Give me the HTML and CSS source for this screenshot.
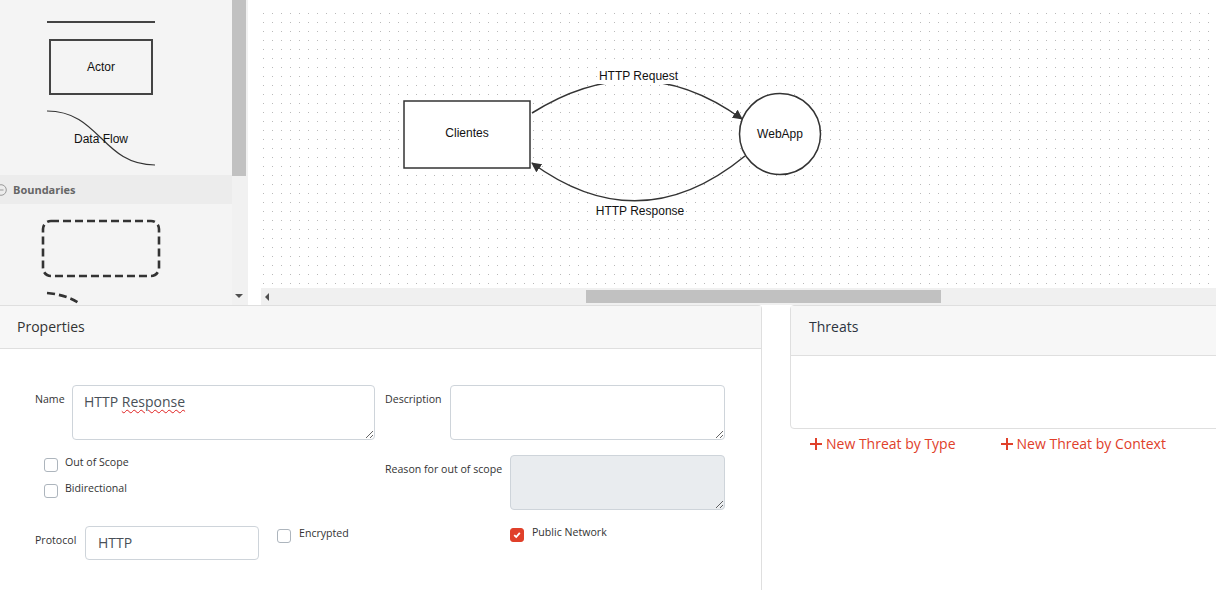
FILE: index.html
```html
<!DOCTYPE html>
<html lang="en">
<head>
    <meta charset="UTF-8">
    <title>Threat Model Editor</title>
    <link rel="stylesheet" href="styles.css">
</head>
<body>
    <div class="editor">
        <div class="stencil">
            <svg class="stencil-shapes" width="232" height="175">
                <line x1="47" y1="22" x2="155" y2="22" stroke="#444" stroke-width="2"/>
                <rect x="50" y="40" width="102" height="54" fill="none" stroke="#444" stroke-width="2"/>
                <text x="101" y="71" text-anchor="middle">Actor</text>
                <path d="M47 111 C100 111 102 165 155 165" fill="none" stroke="#333" stroke-width="1.2"/>
                <text x="101" y="143" text-anchor="middle">Data Flow</text>
            </svg>
            <div class="stencil-group">
                <svg class="group-icon" width="12" height="12" viewBox="0 0 12 12">
                    <circle cx="6" cy="6" r="5.3" fill="none" stroke="#999" stroke-width="1"/>
                    <line x1="3.5" y1="6" x2="8.5" y2="6" stroke="#999" stroke-width="1"/>
                </svg>
                <span>Boundaries</span>
            </div>
            <svg class="stencil-shapes" width="232" height="101">
                <rect x="43" y="17" width="116" height="55" rx="8" fill="none" stroke="#333" stroke-width="2.6" stroke-dasharray="8 4"/>
                <path d="M47 89 Q68 91 80 100" fill="none" stroke="#333" stroke-width="2.6" stroke-dasharray="8 4"/>
            </svg>
        </div>
        <div class="vscroll">
            <div class="vscroll-thumb"></div>
            <div class="vscroll-arrow"></div>
        </div>
        <div class="canvas">
            <svg class="diagram" width="968" height="288" viewBox="248 0 968 288">
                <defs>
                    <pattern id="dots" x="263" y="4" width="9" height="9" patternUnits="userSpaceOnUse">
                        <rect x="0" y="0" width="1" height="1" fill="#b9b9b9"/>
                    </pattern>
                    <marker id="arrow" viewBox="0 0 10 10" refX="9" refY="5" markerWidth="10" markerHeight="10" markerUnits="userSpaceOnUse" orient="auto">
                        <path d="M0 0 L10 5 L0 10 z" fill="#333"/>
                    </marker>
                </defs>
                <rect x="260" y="8" width="956" height="280" fill="url(#dots)"/>

                <rect x="404" y="101" width="126" height="67" fill="#fff" stroke="#333" stroke-width="1.5"/>
                <text x="467" y="137" text-anchor="middle">Clientes</text>

                <circle cx="780" cy="134" r="40.5" fill="#fff" stroke="#333" stroke-width="1.5"/>
                <text x="780" y="138" text-anchor="middle">WebApp</text>

                <path d="M532 113 Q640 45 742 119" fill="none" stroke="#333" stroke-width="1.5" marker-end="url(#arrow)"/>
                <rect x="597" y="67" width="83" height="17" fill="#fff"/>
                <text x="638.5" y="80" text-anchor="middle">HTTP Request</text>

                <path d="M745 156 Q640 242 532 163" fill="none" stroke="#333" stroke-width="1.5" marker-end="url(#arrow)"/>
                <rect x="594" y="202" width="92" height="17" fill="#fff"/>
                <text x="640" y="215" text-anchor="middle">HTTP Response</text>
            </svg>
            <div class="hscroll">
                <div class="hscroll-arrow"></div>
                <div class="hscroll-thumb"></div>
            </div>
        </div>
    </div>

    <div class="panels">
        <div class="card properties">
            <div class="card-header">Properties</div>
            <div class="form-grid">
                <div class="field">
                    <label class="field-label name-label">Name</label>
                    <div class="textbox name-box">HTTP <span class="misspelled">Response</span></div>
                </div>
                <div class="field">
                    <label class="field-label desc-label">Description</label>
                    <textarea class="textbox desc-box"></textarea>
                </div>

                <div class="checks">
                    <div class="check-item">
                        <span class="check"></span>
                        <span class="check-label">Out of Scope</span>
                    </div>
                    <div class="check-item">
                        <span class="check"></span>
                        <span class="check-label">Bidirectional</span>
                    </div>
                </div>
                <div class="field">
                    <label class="field-label reason-label">Reason for out of scope</label>
                    <textarea class="textbox reason-box" disabled></textarea>
                </div>

                <div class="field protocol-row">
                    <label class="field-label proto-label">Protocol</label>
                    <div class="input-box">HTTP</div>
                    <div class="check-item encrypted">
                        <span class="check"></span>
                        <span class="check-label">Encrypted</span>
                    </div>
                </div>
                <div class="check-item public">
                    <span class="check checked">
                        <svg width="8" height="8" viewBox="0 0 8 8"><path d="M1.2 4.2 L3.2 6 L6.8 1.8" fill="none" stroke="#fff" stroke-width="1.8"/></svg>
                    </span>
                    <span class="check-label">Public Network</span>
                </div>
            </div>
        </div>

        <div class="threats-col">
            <div class="card threats">
                <div class="card-header threats-header">Threats</div>
                <div class="threats-body"></div>
            </div>
            <div class="threat-links">
                <a class="threat-link">
                    <svg width="12" height="12" viewBox="0 0 12 12"><path d="M6 0 V12 M0 6 H12" stroke="#e0402a" stroke-width="2"/></svg>
                    New Threat by Type
                </a>
                <a class="threat-link">
                    <svg width="12" height="12" viewBox="0 0 12 12"><path d="M6 0 V12 M0 6 H12" stroke="#e0402a" stroke-width="2"/></svg>
                    New Threat by Context
                </a>
            </div>
        </div>
    </div>
</body>
</html>
```

FILE: styles.css
```css
body {
    margin: 0;
    width: 1216px;
    height: 590px;
    overflow: hidden;
    background-color: #fff;
    font-family: "Open Sans", sans-serif;
    color: #333;
}
.editor {
    display: flex;
    height: 305px;
}
.stencil {
    width: 232px;
    background-color: #f4f4f4;
    overflow: hidden;
}
.stencil-shapes {
    display: block;
}
.stencil-shapes text,
.diagram text {
    font-family: "Liberation Sans", Arial, sans-serif;
    font-size: 12px;
    fill: #111;
}
.stencil-group {
    display: flex;
    align-items: center;
    height: 29px;
    background-color: #ececec;
    font-size: 11px;
    font-weight: bold;
    color: #666;
}
.group-icon {
    margin-left: -5px;
    margin-right: 6px;
}
.vscroll {
    width: 16px;
    background-color: #f1f1f1;
    display: flex;
    flex-direction: column;
    align-items: center;
}
.vscroll-thumb {
    width: 14px;
    height: 176px;
    background-color: #c1c1c1;
    margin-left: -2px;
}
.vscroll-arrow {
    margin-top: auto;
    margin-bottom: 7px;
    margin-left: -2px;
    width: 0;
    height: 0;
    border-left: 4px solid transparent;
    border-right: 4px solid transparent;
    border-top: 4px solid #505050;
}
.canvas {
    flex: 1;
    display: flex;
    flex-direction: column;
}
.diagram {
    display: block;
}
.hscroll {
    height: 17px;
    margin-left: 13px;
    background-color: #f0f0f0;
    display: flex;
    align-items: center;
}
.hscroll-arrow {
    width: 0;
    height: 0;
    margin-left: 4px;
    border-top: 4px solid transparent;
    border-bottom: 4px solid transparent;
    border-right: 4px solid #505050;
}
.hscroll-thumb {
    width: 355px;
    height: 13px;
    margin-left: 317px;
    background-color: #c1c1c1;
}
.panels {
    display: flex;
    gap: 28px;
}
.card {
    border: 1px solid #dfdfdf;
    border-radius: 4px;
    background-color: #fff;
}
.card-header {
    height: 42px;
    line-height: 42px;
    padding-left: 17px;
    background-color: #f7f7f7;
    border-bottom: 1px solid #dfdfdf;
    font-size: 14px;
    color: #333;
}
.properties {
    width: 761px;
    height: 300px;
    border-left: none;
    border-radius: 0 4px 0 0;
}
.form-grid {
    display: grid;
    grid-template-columns: 340px 340px;
    column-gap: 10px;
    row-gap: 15px;
    padding: 36px 0 0 35px;
}
.field {
    display: flex;
    align-items: flex-start;
}
.field-label {
    font-size: 10.6px;
    line-height: 15px;
    padding-top: 7px;
    color: #333;
}
.name-label { width: 37px; }
.desc-label { width: 65px; }
.reason-label { width: 125px; }
.proto-label { width: 50px; }
.protocol-row {
    margin-top: 1px;
}
.textbox {
    box-sizing: border-box;
    height: 55px;
    border: 1px solid #ced4da;
    border-radius: 4px;
    padding: 6px 12px;
    font-family: "Open Sans", sans-serif;
    font-size: 14px;
    line-height: 20px;
    color: #495057;
    background-color: #fff;
    resize: vertical;
    overflow: auto;
    margin: 0;
}
.name-box {
    width: 303px;
    padding-left: 11px;
}
.desc-box { width: 275px; }
.reason-box {
    width: 215px;
    background-color: #e9ecef;
}
.misspelled {
    text-decoration: underline wavy #e02020;
    text-decoration-thickness: 1px;
    text-underline-offset: 2px;
}
.input-box {
    box-sizing: border-box;
    width: 174px;
    height: 34px;
    border: 1px solid #ced4da;
    border-radius: 4px;
    padding: 0 12px;
    font-size: 14px;
    line-height: 32px;
    color: #495057;
}
.checks {
    padding-left: 9px;
}
.check-item {
    display: flex;
    align-items: flex-start;
    gap: 7px;
}
.check-item + .check-item {
    margin-top: 9px;
}
.check {
    box-sizing: border-box;
    width: 14px;
    height: 14px;
    margin-top: 3px;
    border: 1px solid #adb5bd;
    border-radius: 3px;
    background-color: #fff;
    display: flex;
    align-items: center;
    justify-content: center;
}
.check.checked {
    background-color: #e0402a;
    border-color: #e0402a;
}
.check-label {
    font-size: 10.6px;
    line-height: 14px;
    color: #333;
}
.encrypted {
    margin-left: 18px;
    gap: 8px;
}
.public {
    margin-left: 125px;
    gap: 8px;
}
.threats-col {
    flex: 1;
    margin-right: -10px;
}
.threats-header {
    height: 49px;
    line-height: 42px;
    padding-left: 18px;
    color: #2c3440;
}
.threats-body {
    height: 72px;
}
.threat-links {
    display: flex;
    gap: 45px;
    padding: 5px 0 0 20px;
}
.threat-link {
    display: flex;
    align-items: center;
    gap: 4px;
    font-size: 14px;
    color: #e0402a;
    cursor: pointer;
}
```
